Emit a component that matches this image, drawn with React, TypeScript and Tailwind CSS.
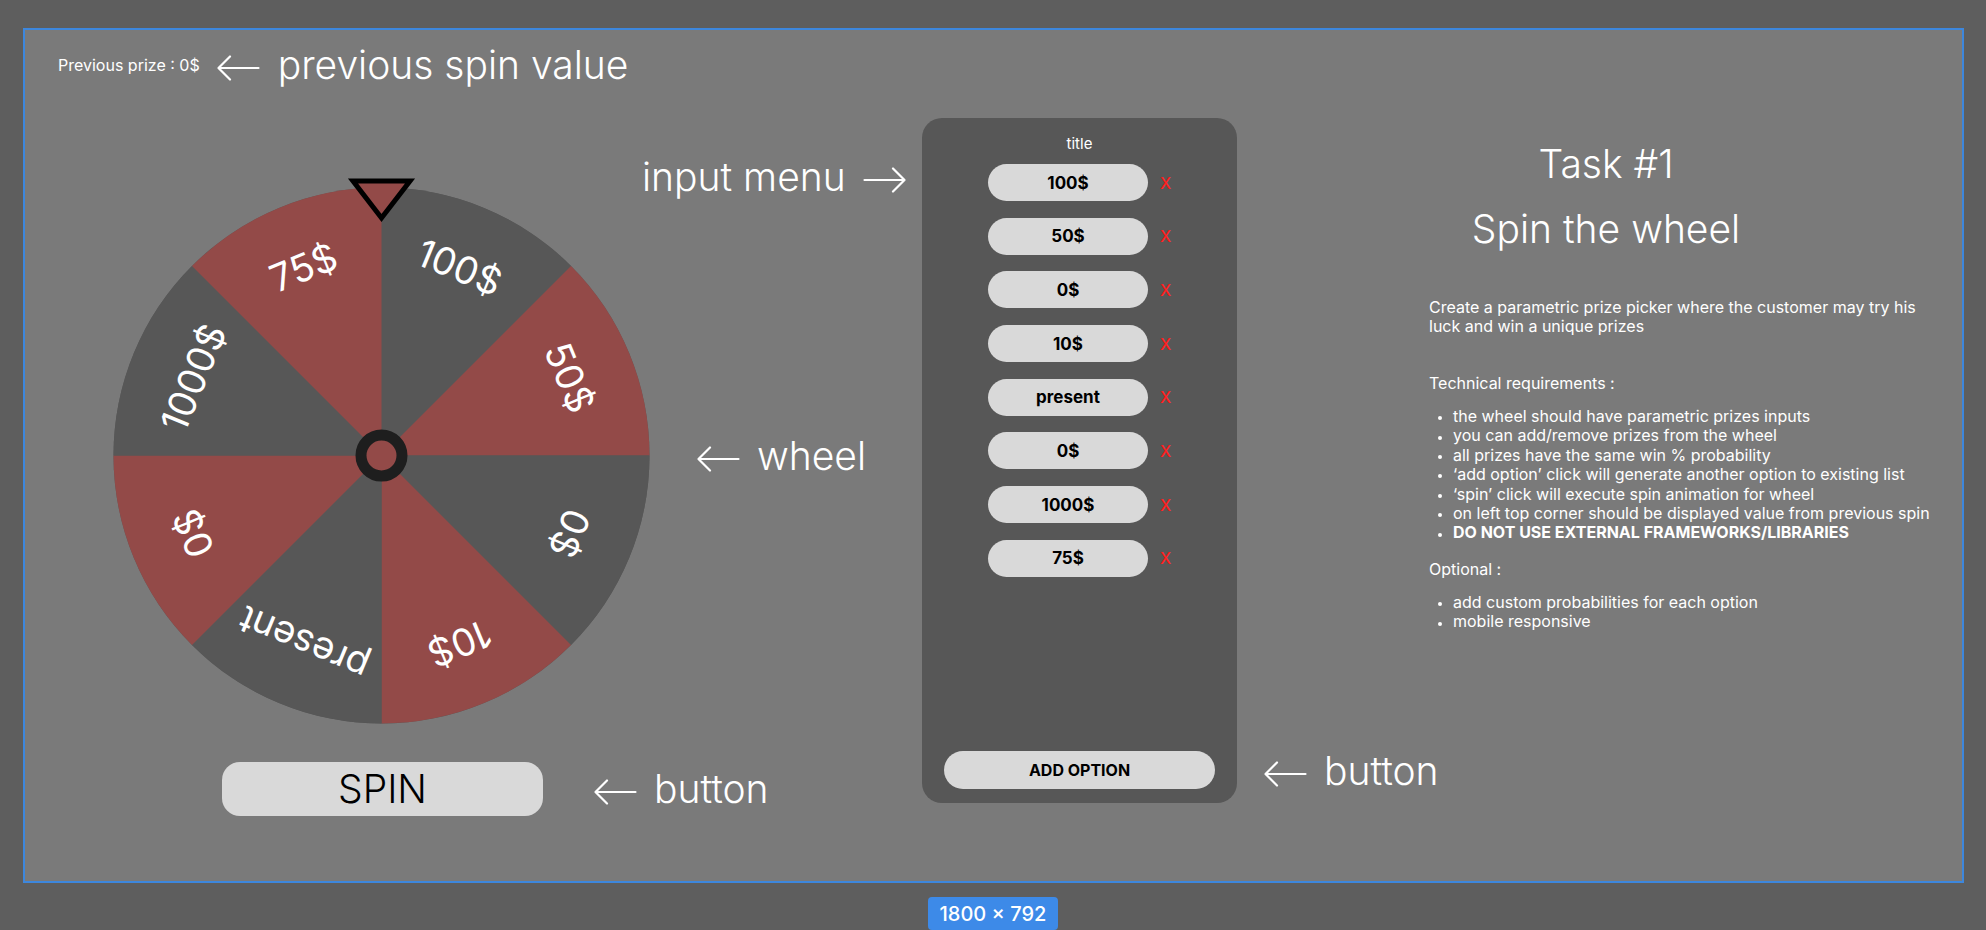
import { useState } from "react";

const RED = "#934a48";
const DARK = "#575757";

const initialPrizes = ["100$", "50$", "0$", "10$", "present", "0$", "1000$", "75$"];

const technical = [
  "the wheel should have parametric prizes inputs",
  "you can add/remove prizes from the wheel",
  "all prizes have the same win % probability",
  "\u2018add option\u2019 click will generate another option to existing list",
  "\u2018spin\u2019 click will execute spin animation for wheel",
  "on left top corner should be displayed value from previous spin",
];

const optional = ["add custom probabilities for each option", "mobile responsive"];

function Arrow({ dir, className = "" }: { dir: "left" | "right"; className?: string }) {
  return (
    <svg
      width="43"
      height="26"
      viewBox="0 0 43 26"
      fill="none"
      stroke="white"
      strokeWidth="2.2"
      strokeLinecap="round"
      strokeLinejoin="round"
      className={`shrink-0 ${dir === "right" ? "rotate-180" : ""} ${className}`}
    >
      <path d="M41.5 13H1.5M13 1.5L1.5 13L13 24.5" />
    </svg>
  );
}

function Wheel({ prizes, rotation }: { prizes: string[]; rotation: number }) {
  const cx = 270.5;
  const cy = 281.5;
  const r = 268;
  const step = 360 / Math.max(prizes.length, 1);
  const pt = (deg: number) => {
    const a = (deg * Math.PI) / 180;
    return [cx + r * Math.sin(a), cy - r * Math.cos(a)];
  };

  return (
    <svg width="541" height="552" viewBox="0 0 541 552" className="block shrink-0">
      <g
        style={{
          transform: `rotate(${rotation}deg)`,
          transformOrigin: `${cx}px ${cy}px`,
          transition: "transform 4s cubic-bezier(0.2, 0.8, 0.2, 1)",
        }}
      >
        <circle cx={cx} cy={cy} r={r} fill={DARK} />
        {prizes.map((p, i) => {
          const [x0, y0] = pt(i * step);
          const [x1, y1] = pt((i + 1) * step);
          return (
            <path
              key={"s" + i}
              d={`M${cx} ${cy}L${x0} ${y0}A${r} ${r} 0 ${step > 180 ? 1 : 0} 1 ${x1} ${y1}Z`}
              fill={i % 2 === 0 ? DARK : RED}
            />
          );
        })}
        {prizes.map((p, i) => (
          <text
            key={"t" + i}
            x={cx}
            y={cy - 204}
            textAnchor="middle"
            dominantBaseline="central"
            transform={`rotate(${i * step + step / 2} ${cx} ${cy})`}
            fill="white"
            fontSize="38"
            fontFamily="Inter, sans-serif"
          >
            {p}
          </text>
        ))}
      </g>
      <circle cx={cx} cy={cy} r="20.5" fill={RED} stroke="#1e1e1e" strokeWidth="11" />
      <polygon points="242,7 299,7 270.5,44" fill={RED} stroke="black" strokeWidth="5" strokeLinejoin="miter" />
    </svg>
  );
}

export default function App() {
  const [prizes, setPrizes] = useState<string[]>(initialPrizes);
  const [rotation, setRotation] = useState(0);
  const [previous, setPrevious] = useState("0$");
  const [spinning, setSpinning] = useState(false);

  const spin = () => {
    if (spinning || prizes.length === 0) return;
    const step = 360 / prizes.length;
    const index = Math.floor(Math.random() * prizes.length);
    const target = -(index * step + step / 2);
    const current = ((rotation % 360) + 360) % 360;
    const delta = (((target - current) % 360) + 360) % 360;
    setSpinning(true);
    setRotation(rotation + 5 * 360 + delta);
    setTimeout(() => {
      setPrevious(prizes[index]);
      setSpinning(false);
    }, 4000);
  };

  return (
    <div className="h-[930px] w-full overflow-hidden bg-[#5e5e5e] pl-[23px] pt-[28px] font-['Inter',sans-serif] text-white">
      <div className="flex h-[855px] w-[1941px] border-2 border-[#3d87dd] bg-[#7a7a7a]">
        {/* wheel side */}
        <div className="flex w-[897px] shrink-0 flex-col pt-[12px]">
          <div className="flex h-[46px] items-center pl-[33px]">
            <span className="whitespace-nowrap text-[16px] leading-[18px]">Previous prize : {previous}</span>
            <Arrow dir="left" className="ml-[17px] mt-[6px]" />
            <span className="ml-[18px] whitespace-nowrap text-[39px] font-light leading-[46px]">previous spin value</span>
          </div>

          <div className="mt-[66px] flex pl-[86px]">
            <div className="mt-[20px]">
              <Wheel prizes={prizes} rotation={rotation} />
            </div>
            <div className="-ml-[10px] flex flex-col">
              <div className="flex h-[46px] items-center">
                <span className="whitespace-nowrap text-[39px] font-light leading-[46px]">input menu</span>
                <Arrow dir="right" className="ml-[17px] mt-[6px]" />
              </div>
              <div className="mt-[233px] flex h-[46px] items-center pl-[55px]">
                <Arrow dir="left" className="mt-[6px]" />
                <span className="ml-[17px] whitespace-nowrap text-[39px] font-light leading-[46px]">wheel</span>
              </div>
            </div>
          </div>

          <div className="mt-[36px] flex items-center pl-[197px]">
            <button
              onClick={spin}
              className="h-[54px] w-[321px] rounded-[18px] bg-[#d9d9d9] text-[39px] font-light leading-[46px] text-black"
            >
              SPIN
            </button>
            <Arrow dir="left" className="ml-[51px] mt-[6px]" />
            <span className="ml-[17px] whitespace-nowrap text-[39px] font-light leading-[46px]">button</span>
          </div>
        </div>

        {/* input menu */}
        <div className="mt-[88px] flex h-[685px] w-[315px] shrink-0 flex-col rounded-[20px] bg-[#575757]">
          <p className="pt-[16px] text-center text-[15px] leading-[20px]">title</p>
          <div className="mt-[10px] flex flex-col gap-[16.7px]">
            {prizes.map((p, i) => (
              <div key={i} className="flex h-[37px] items-center pl-[66px]">
                <input
                  value={p}
                  onChange={(e) => setPrizes(prizes.map((x, j) => (j === i ? e.target.value : x)))}
                  className="h-[37px] w-[160px] rounded-full bg-[#d9d9d9] text-center text-[17px] font-bold text-black outline-none"
                />
                <button
                  onClick={() => setPrizes(prizes.filter((_, j) => j !== i))}
                  className="ml-[12px] text-[16px] font-medium leading-[20px] text-[#ff1f1f]"
                >
                  X
                </button>
              </div>
            ))}
          </div>
          <button
            onClick={() => setPrizes([...prizes, "0$"])}
            className="mx-[22px] mb-[14px] mt-auto h-[38px] shrink-0 rounded-full bg-[#d9d9d9] text-[16px] font-bold text-black"
          >
            ADD OPTION
          </button>
        </div>

        {/* task */}
        <div className="flex flex-1 flex-col pt-[111px]">
          <div className="ml-[192px] w-[354px] text-center text-[39px] font-light leading-[46px]">
            <p className="whitespace-nowrap">Task #1</p>
            <p className="mt-[19px] whitespace-nowrap">Spin the wheel</p>
          </div>
          <div className="ml-[192px] whitespace-nowrap text-[16px] leading-[19.4px]">
            <p className="mt-[46px]">
              Create a parametric prize picker where the customer may try his
              <br />
              luck and win a unique prizes
            </p>
            <p className="mt-[37.2px]">Technical requirements :</p>
            <ul className="mt-[13.6px]">
              {technical.map((t) => (
                <li key={t} className="flex items-center">
                  <span className="ml-[9px] mr-[11px] mt-[3px] h-[4px] w-[4px] rounded-full bg-white" />
                  {t}
                </li>
              ))}
              <li className="flex items-center font-bold">
                <span className="ml-[9px] mr-[11px] mt-[3px] h-[4px] w-[4px] rounded-full bg-white" />
                DO NOT USE EXTERNAL FRAMEWORKS/LIBRARIES
              </li>
            </ul>
            <p className="mt-[17.2px]">Optional :</p>
            <ul className="mt-[13.6px]">
              {optional.map((t) => (
                <li key={t} className="flex items-center">
                  <span className="ml-[9px] mr-[11px] mt-[3px] h-[4px] w-[4px] rounded-full bg-white" />
                  {t}
                </li>
              ))}
            </ul>
          </div>
          <div className="ml-[27px] mt-[116px] flex h-[46px] items-center">
            <Arrow dir="left" className="mt-[6px]" />
            <span className="ml-[17px] whitespace-nowrap text-[39px] font-light leading-[46px]">button</span>
          </div>
        </div>
      </div>

      <div className="ml-[905px] mt-[14px] flex h-[33px] w-[130px] items-center justify-center rounded-[4px] bg-[#3d8ae8] text-[20px] font-medium">
        1800 × 792
      </div>
    </div>
  );
}
